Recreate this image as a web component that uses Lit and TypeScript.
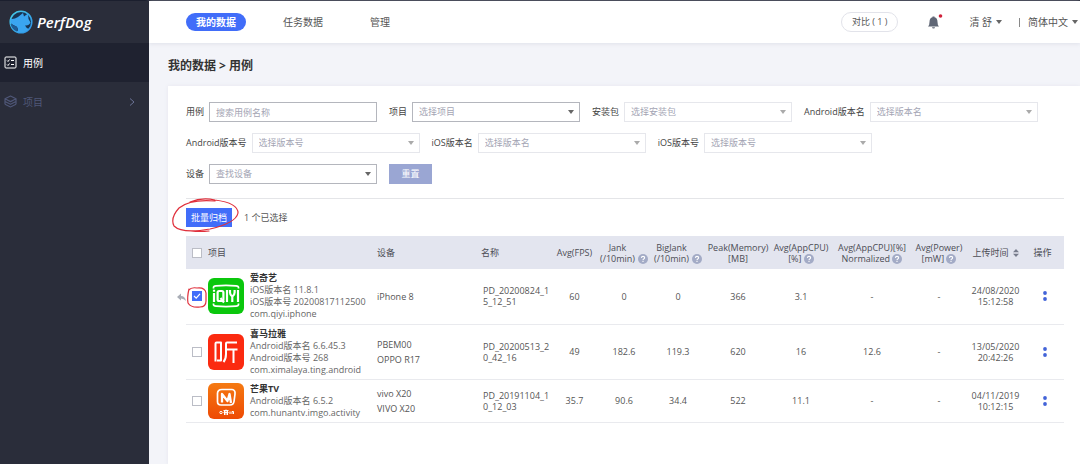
import { LitElement, html, css, svg } from "lit";
import { customElement } from "lit/decorators.js";

interface Field {
  id: string;
  label: string;
  hint: string;
  kind: "text" | "select";
  muted?: boolean;
}

const FIELDS: Field[] = [
  { id: "case", label: "用例", hint: "搜索用例名称", kind: "text" },
  { id: "project", label: "项目", hint: "选择项目", kind: "select" },
  { id: "package", label: "安装包", hint: "选择安装包", kind: "select", muted: true },
  { id: "android-name", label: "Android版本名", hint: "选择版本名", kind: "select", muted: true },
  { id: "android-code", label: "Android版本号", hint: "选择版本号", kind: "select", muted: true },
  { id: "ios-name", label: "iOS版本名", hint: "选择版本名", kind: "select", muted: true },
  { id: "ios-code", label: "iOS版本号", hint: "选择版本号", kind: "select", muted: true },
  { id: "device", label: "设备", hint: "查找设备", kind: "select" },
];

const iqiyi = svg`
  <rect width="36" height="36" rx="6" fill="#0bc70d"/>
  <g fill="none" stroke="#fff" stroke-width="2.200">
    <path d="M5.500 10.500V9.500Q5.500 8 8 7.800Q18 7 28 7.800Q30.500 8 30.500 9.500V10.500" stroke-width="1.700"/>
    <path d="M5.500 25.500V26.500Q5.500 28 8 28.200Q18 29 28 28.200Q30.500 28 30.500 26.500V25.500" stroke-width="1.700"/>
    <path d="M6 15V24M6 11.800V13.800"/>
    <rect x="9.600" y="13" width="5.800" height="10" rx="1.500"/>
    <path d="M12.500 20L16 24.500M19 12V24M22 12V14.500Q22 17 24.300 18.500Q26.600 17 26.600 14.500V12M24.300 18V24M30 12V24"/>
  </g>`;

const ximalaya = svg`
  <rect width="36" height="36" rx="6" fill="#fb2a10"/>
  <g fill="none" stroke="#fff" stroke-width="2" stroke-linejoin="round">
    <path d="M7.500 27.500V9.500Q7.500 8.500 8.500 8.500H13V26.500H9"/>
    <path d="M29 8.500H19Q18 8.500 18 9.500V20Q18 25 15.500 28"/>
    <path d="M18 15.500H29.500M25.500 15.500V29"/>
  </g>`;

const mango = svg`
  <defs><linearGradient id="mango" x1="0" y1="0" x2="0" y2="1"><stop stop-color="#f57a12"/><stop offset="1" stop-color="#ee4a04"/></linearGradient></defs>
  <rect width="36" height="36" rx="6" fill="url(#mango)"/>
  <path d="M14 6.500H24Q27.500 7 27 11L26 18.500Q25.500 22 22 22H13Q9.500 22 9.500 18.500V10.500Q9.500 6.500 14 6.500Z" fill="none" stroke="#fff" stroke-width="1.700"/>
  <path d="M14 19.500V11L19.500 18L21.500 11L23 20" fill="none" stroke="#fff" stroke-width="2.300" stroke-linejoin="round"/>
  <g stroke="#fff" stroke-width="1" fill="none"><circle cx="13" cy="29.500" r="1.200"/><path d="M15.500 27.500H20.500M16.500 27.500V32M18 26.500V32M19.500 27.500V32M15.500 29.500H20.500M22 28.500V31M24 31V28.500H25.500V31"/></g>`;

const ROWS = [
  {
    icon: iqiyi, checked: true, title: "爱奇艺",
    lines: ["iOS版本名 11.8.1", "iOS版本号 20200817112500", "com.qiyi.iphone"],
    device: ["iPhone 8"], name: "PD_20200824_15_12_51",
    values: ["60", "0", "0", "366", "3.1", "-", "-"], time: ["24/08/2020", "15:12:58"],
  },
  {
    icon: ximalaya, checked: false, title: "喜马拉雅",
    lines: ["Android版本名 6.6.45.3", "Android版本号 268", "com.ximalaya.ting.android"],
    device: ["PBEM00", "OPPO R17"], name: "PD_20200513_20_42_16",
    values: ["49", "182.6", "119.3", "620", "16", "12.6", "-"], time: ["13/05/2020", "20:42:26"],
  },
  {
    icon: mango, checked: false, title: "芒果TV",
    lines: ["Android版本名 6.5.2", "com.hunantv.imgo.activity"],
    device: ["vivo X20", "VIVO X20"], name: "PD_20191104_10_12_03",
    values: ["35.7", "90.6", "34.4", "522", "11.1", "-", "-"], time: ["04/11/2019", "10:12:15"],
  },
];

const help = html`<svg class="help" viewBox="0 0 10 10" aria-hidden="true">
  <circle cx="5" cy="5" r="5" fill="#a3abc6"/>
  <path d="M3.400 3.900Q3.500 2.400 5 2.400Q6.600 2.400 6.600 3.700Q6.600 4.500 5.700 5Q5 5.400 5 6.200M5 7.100V8.100" fill="none" stroke="#fff" stroke-width="1.100"/>
</svg>`;

@customElement("app-root")
export class AppRoot extends LitElement {
  static styles = css`
    :host {
      display: grid;
      grid-template-columns: 149px minmax(0, 1fr);
      min-height: 100vh;
      position: relative;
      box-sizing: border-box;
      border-top: 1px solid #1b1f2e;
      background: #f3f4f9;
      color: #555;
      font: 9px/12px "Open Sans", "Noto Sans CJK SC", sans-serif;
    }
    * { box-sizing: border-box; }
    svg { display: block; flex: none; }
    button, input, select { font: inherit; color: inherit; margin: 0; border-radius: 0; }
    button { border: 0; padding: 0; background: none; }
    a { color: inherit; text-decoration: none; }

    .side { background: #2a2d3a; z-index: 1; }
    .brand { display: flex; align-items: center; gap: 4px; height: 42px; padding-left: 9px; color: #fff; font: italic 600 15px/20px "Open Sans", sans-serif; }
    .entry { display: flex; align-items: center; gap: 6px; height: 39px; padding: 0 14px 0 4px; font-size: 10px; color: #4f5778; }
    .entry.on { background: #1f2230; color: #fff; }
    .entry .chev { margin-left: auto; }

    .top { display: flex; align-items: center; height: 42px; padding: 0 2px 0 37px; background: #fff; box-shadow: 0 1px 4px #dfe1ea; font-size: 10px; }
    .tabs { display: flex; align-items: center; gap: 37px; margin-right: auto; }
    .tabs a.on { height: 18px; padding: 0 10px; border-radius: 9px; background: #416df9; color: #fff; font-weight: bold; line-height: 18px; }
    .tabs a:last-child { margin-left: 10px; }
    .compare { height: 20px; padding: 0 10px; border: 1px solid #e2e3ea; border-radius: 10px; font-size: 9px; white-space: nowrap; }
    .bell { margin: 0 26px 0 29px; }
    .drop { display: flex; align-items: center; gap: 4px; white-space: nowrap; }
    .lang { margin-left: 17px; }
    .bar { width: 1px; height: 9px; margin-right: 4px; background: #888; }

    h1 { margin: 0; padding: 2px 19px 0; font-size: 12px; line-height: 41px; color: #333; word-spacing: normal; }
    .card { margin-left: 19px; padding: 16px 16px 42px 18px; min-height: calc(100vh - 86px); background: #fff; box-shadow: 0 0 4px #e6e7ef; }
    .filters { display: flex; flex-wrap: wrap; gap: 11px 12px; padding-bottom: 14px; border-bottom: 1px solid #e4e5e8; }
    .field { display: flex; align-items: center; gap: 5px; white-space: nowrap; color: #444; }
    .box { position: relative; }
    .box input, .box select { display: block; appearance: none; width: 168px; height: 20px; padding: 0 6px; border: 1px solid #b4b6bd; background: #fff; color: #a4a5b4; }
    .box input::placeholder { color: #a4a5b4; opacity: 1; }
    .box .caret { position: absolute; right: 6px; top: 8px; pointer-events: none; }
    .caret { color: #666; }
    .box .muted { border-color: #e6e7ec; }
    .muted + .caret { color: #aaa; }
    .reset { width: 43px; height: 20px; background: #9aa6d3; color: #fff; }

    .batch { display: flex; align-items: center; gap: 12px; padding: 9px 0; }
    .archive { width: 46px; height: 19px; background: #416df9; color: #fff; }

    table { width: 100%; border-collapse: collapse; table-layout: fixed; text-align: center; line-height: 11px; }
    th { height: 33px; padding: 0; background: #e3e5ef; font-weight: normal; color: #4c4d55; white-space: nowrap; }
    td { height: 55px; padding: 0; border-bottom: 1px solid #e9eaee; }
    tr:last-child td { height: 43px; }
    .l { text-align: left; }
    .act { padding-right: 5px; }
    .pick { padding-left: 6px; }
    .pick input { display: block; appearance: none; width: 10px; height: 10px; border: 1px solid #bbbdc6; background: #fff; }
    .pick input:checked { border-color: #416df9; background: #416df9 url("data:image/svg+xml,%3Csvg xmlns='http://www.w3.org/2000/svg' viewBox='0 0 8 8'%3E%3Cpath d='M1 4L3.200 6.200L7 1.800' fill='none' stroke='white' stroke-width='1.200'/%3E%3C/svg%3E"); }
    .app { display: flex; align-items: center; gap: 6px; line-height: 12px; white-space: nowrap; color: #666; }
    .app strong { display: block; color: #333; }
    .device { line-height: 15px; }
    td.name { padding: 0 2px; word-break: break-all; }
    .help { display: inline-block; width: 10px; height: 10px; vertical-align: -2px; }
    .unit { display: inline-flex; align-items: flex-end; gap: 3px; }
    .sort { display: inline-flex; align-items: center; gap: 4px; }
    .more { display: block; margin: 0 auto; }
    .notes { position: absolute; left: 170px; top: 190px; pointer-events: none; }
  `;

  private caret() {
    return html`<svg class="caret" width="6" height="4" viewBox="0 0 6 4" aria-hidden="true"><path d="M0 0H6L3 4Z" fill="currentColor"/></svg>`;
  }

  private field(f: Field) {
    return html`<div class="field">
      <label for=${f.id}>${f.label}</label>
      <span class="box">
        ${f.kind === "text"
          ? html`<input id=${f.id} type="text" placeholder=${f.hint} />`
          : html`<select id=${f.id} class=${f.muted ? "muted" : ""}><option>${f.hint}</option></select>${this.caret()}`}
      </span>
    </div>`;
  }

  render() {
    return html`
      <aside class="side">
        <div class="brand">
          <svg width="24" height="24" viewBox="0 0 24 24" aria-hidden="true">
            <defs><linearGradient id="ring" x1="0" y1="0" x2="1" y2="1"><stop stop-color="#47cde8"/><stop offset="1" stop-color="#2d8fe6"/></linearGradient></defs>
            <circle cx="12" cy="12" r="10.800" fill="#183452" stroke="url(#ring)" stroke-width="1.500"/>
            <path d="M1.500 9Q5.500 9.500 9 7L14 3L15 6.500L19 3.500L19.500 9L21.500 12.500Q20 16 16 15.500Q17 18 20 19Q15 24 8 22Q10 19 7.500 16.500Q4 15 1.500 13Z" fill="#3aa5f0"/>
            <path d="M1.500 14Q5 15.500 7.500 16.500Q9.500 19 8 21.500Q3 19.500 1.500 14Z" fill="#1e5c96"/>
          </svg>
          <span>PerfDog</span>
        </div>
        <nav>
          <a class="entry on" href="#case">
            <svg width="13" height="13" viewBox="0 0 13 13" fill="none" stroke="currentColor" aria-hidden="true"><rect x="1" y="1" width="11" height="11" rx="1"/><path d="M3 4.500l1 1 1.500-2M3 8.500l1 1 1.500-2M7 4.500h3M7 8.500h3"/></svg>
            <span>用例</span>
          </a>
          <a class="entry" href="#project">
            <svg width="13" height="13" viewBox="0 0 13 13" fill="none" stroke="currentColor" stroke-width="1.200" stroke-linejoin="round" aria-hidden="true"><path d="M6.500 1L12 3.800L6.500 6.600L1 3.800ZM1 6.500L6.500 9.300L12 6.500M1 9.200L6.500 12L12 9.200M1 3.800V9.200M12 3.800V9.200"/></svg>
            <span>项目</span>
            <svg class="chev" width="6" height="8" viewBox="0 0 6 8" fill="none" stroke="#6b7396" aria-hidden="true"><path d="M1 .500L5 4L1 7.500"/></svg>
          </a>
        </nav>
      </aside>
      <main>
        <header class="top">
          <nav class="tabs">
            <a class="on" href="#mine">我的数据</a>
            <a href="#tasks">任务数据</a>
            <a href="#admin">管理</a>
          </nav>
          <button class="compare">对比 ( 1 )</button>
          <svg class="bell" width="16" height="16" viewBox="0 0 16 16" aria-label="通知">
            <path d="M1 12.500Q2.500 11.500 2.500 8Q2.500 4 5.500 3.300V2.500H7.500V3.300Q10.500 4 10.500 8Q10.500 11.500 12 12.500ZM5 13.200H8Q8 14.500 6.500 14.500Q5 14.500 5 13.200Z" fill="#5f6675"/>
            <circle cx="13.500" cy="2" r="1.800" fill="#d0213a"/>
          </svg>
          <a class="drop" href="#user">清 舒 ${this.caret()}</a>
          <a class="drop lang" href="#lang"><span class="bar"></span>简体中文 ${this.caret()}</a>
        </header>
        <h1>我的数据 &gt; 用例</h1>
        <section class="card">
          <form class="filters">
            ${FIELDS.map((f) => this.field(f))}
            <button class="reset" type="reset">重置</button>
          </form>
          <div class="batch">
            <button class="archive">批量归档</button>
            <span>1 个已选择</span>
          </div>
          <table>
            <colgroup>
              <col width="22" /><col /><col width="104" /><col width="71" /><col width="45" />
              <col width="54" /><col width="54" /><col width="66" /><col width="60" /><col width="82" />
              <col width="52" /><col width="61" /><col width="38" />
            </colgroup>
            <thead>
              <tr>
                <th class="pick"><input type="checkbox" aria-label="全选" /></th>
                <th class="l">项目</th>
                <th class="l">设备</th>
                <th class="l">名称</th>
                <th>Avg(FPS)</th>
                <th><span class="unit"><span>Jank<br />(/10min)</span>${help}</span></th>
                <th><span class="unit"><span>BigJank<br />(/10min)</span>${help}</span></th>
                <th>Peak(Memory)<br />[MB]</th>
                <th>Avg(AppCPU)<br />[%] ${help}</th>
                <th>Avg(AppCPU)[%]<br />Normalized ${help}</th>
                <th>Avg(Power)<br />[mW] ${help}</th>
                <th><span class="sort">上传时间 <svg width="6" height="8" viewBox="0 0 6 8" fill="#777c8c" aria-hidden="true"><path d="M0 3.300L3 0L6 3.300ZM0 4.700L3 8L6 4.700Z"/></svg></span></th>
                <th class="act">操作</th>
              </tr>
            </thead>
            <tbody>
              ${ROWS.map((r) => html`<tr>
                <td class="pick"><input type="checkbox" aria-label=${r.title} .checked=${r.checked} /></td>
                <td class="l"><div class="app">
                  <svg width="36" height="36" viewBox="0 0 36 36" aria-hidden="true">${r.icon}</svg>
                  <div><strong>${r.title}</strong>${r.lines.map((t) => html`<div>${t}</div>`)}</div>
                </div></td>
                <td class="l device">${r.device.map((t) => html`<div>${t}</div>`)}</td>
                <td class="l name">${r.name}</td>
                ${r.values.map((v) => html`<td>${v}</td>`)}
                <td>${r.time[0]}<br />${r.time[1]}</td>
                <td><button class="more" aria-label="更多"><svg width="4" height="10" viewBox="0 0 4 10" fill="#4263d8"><circle cx="2" cy="2" r="1.900"/><circle cx="2" cy="8" r="1.900"/></svg></button></td>
              </tr>`)}
            </tbody>
          </table>
        </section>
      </main>
      <svg class="notes" width="80" height="120" viewBox="0 0 80 120" fill="none" stroke="#e0303c" stroke-width="1.200" stroke-linecap="round" aria-hidden="true">
        <path d="M45 10Q20 8 9 17Q0 27 4 35Q12 43 40 38Q66 32 68 22Q68 12 45 9Q32 6 20 11M21 40Q30 41 39 40"/>
        <path d="M19 98Q17 106 18 112Q21 117 30 116Q36 116 36 110V102Q35 96 27 97Q21 96 19 99"/>
        <path d="M7 106L11 102.500V105Q15 105 16 110Q14 107.500 11 107.500V109.500Z" fill="#a9adb6" stroke="none"/>
      </svg>
    `;
  }
}
